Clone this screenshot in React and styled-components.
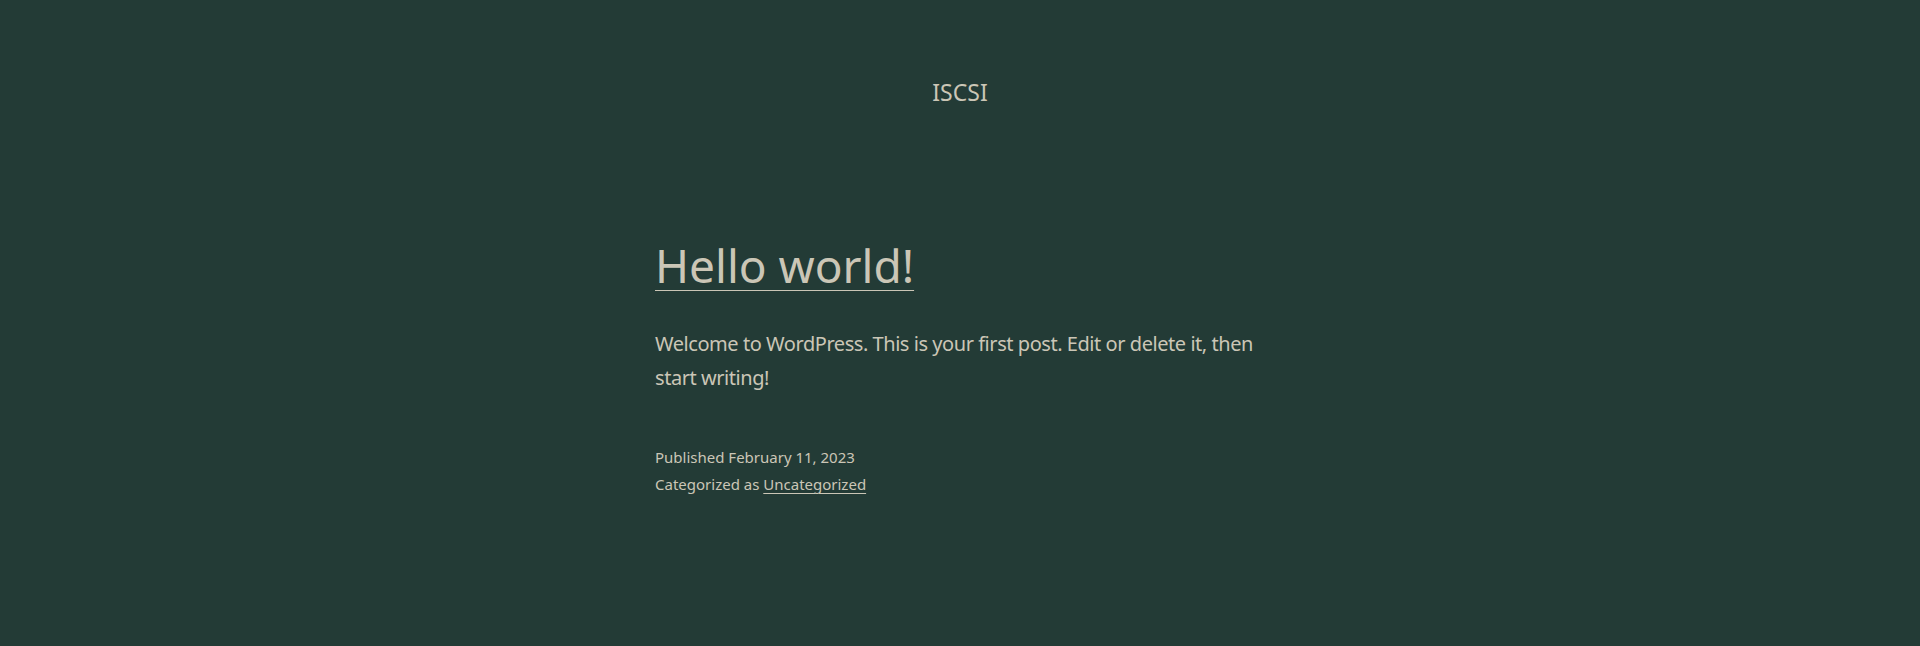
import React from "react";
import styled, { createGlobalStyle } from "styled-components";

const Global = createGlobalStyle`
  html, body { margin: 0; padding: 0; background: #233b36; }
  body { font-family: "Noto Sans", "DejaVu Sans", sans-serif; color: #cbc6b6; }
`;

const Page = styled.div`
  min-height: 646px;
  background: #233b36;
  display: flex;
  flex-direction: column;
  align-items: center;
`;

const Header = styled.header`
  padding-top: 74px;
  display: flex;
  justify-content: center;
  width: 100%;
`;

const SiteTitle = styled.a`
  font-size: 23px;
  line-height: 36px;
  color: #cbc6b6;
  text-decoration: none;
`;

const Article = styled.main`
  width: 610px;
  padding-top: 128px;
  display: flex;
  flex-direction: column;
`;

const Title = styled.h1`
  margin: 0;
  font-weight: 400;
  font-size: 46px;
  line-height: 55px;
  a {
    color: #cbc6b6;
    text-decoration: underline;
    text-decoration-thickness: 1px;
    text-underline-offset: 7px;
  }
`;

const Body = styled.p`
  margin: 34px 0 0;
  font-size: 20px;
  line-height: 34px;
  letter-spacing: -0.45px;
`;

const Meta = styled.div`
  margin-top: 49px;
  font-size: 15px;
  line-height: 27px;
  display: flex;
  flex-direction: column;
  a {
    color: #cbc6b6;
    text-decoration: underline;
    text-decoration-thickness: 1px;
    text-underline-offset: 3px;
  }
`;

export default function App() {
  return (
    <>
      <Global />
      <Page>
        <Header>
          <SiteTitle href="#">ISCSI</SiteTitle>
        </Header>
        <Article>
          <Title>
            <a href="#">Hello world!</a>
          </Title>
          <Body>
            Welcome to WordPress. This is your first post. Edit or delete it, then start writing!
          </Body>
          <Meta>
            <span>Published February 11, 2023</span>
            <span>
              Categorized as <a href="#">Uncategorized</a>
            </span>
          </Meta>
        </Article>
      </Page>
    </>
  );
}
